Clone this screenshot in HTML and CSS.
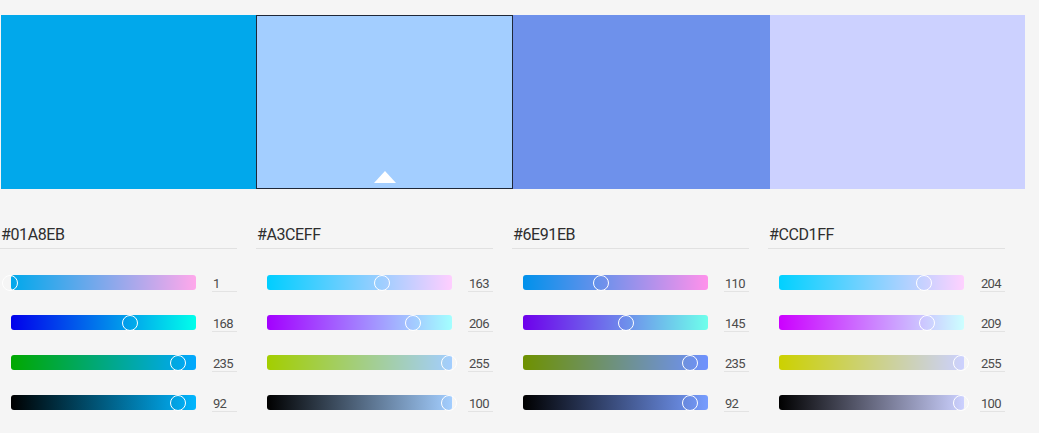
FILE: index.html
```html
<!DOCTYPE html>
<html>
<head>
<meta charset="utf-8">
<link rel="stylesheet" href="styles.css">
</head>
<body>
<div class="swatches">
  <div class="swatch s1"></div>
  <div class="swatch s2 active"><span class="marker"></span></div>
  <div class="swatch s3"></div>
  <div class="swatch s4"></div>
</div>
<div class="panels">
  <div class="panel">
    <div class="hex">#01A8EB</div>
    <div class="row"><div class="track" style="background: linear-gradient(to right, rgb(0,168,235), rgb(255,168,235));"><span class="thumb" style="left: calc(0.4% - 1.5px);"></span></div><div class="value">1</div></div>
    <div class="row"><div class="track" style="background: linear-gradient(to right, rgb(1,0,235), rgb(1,255,235));"><span class="thumb" style="left: calc(65.9% - 3px);"></span></div><div class="value">168</div></div>
    <div class="row"><div class="track" style="background: linear-gradient(to right, rgb(1,168,0), rgb(1,168,255));"><span class="thumb" style="left: calc(92.2% - 3.5px);"></span></div><div class="value">235</div></div>
    <div class="row"><div class="track" style="background: linear-gradient(to right, rgb(0,0,0), rgb(1,182,255));"><span class="thumb" style="left: calc(92% - 3.5px);"></span></div><div class="value">92</div></div>
  </div>
  <div class="panel">
    <div class="hex">#A3CEFF</div>
    <div class="row"><div class="track" style="background: linear-gradient(to right, rgb(0,206,255), rgb(255,206,255));"><span class="thumb" style="left: calc(63.9% - 3px);"></span></div><div class="value">163</div></div>
    <div class="row"><div class="track" style="background: linear-gradient(to right, rgb(163,0,255), rgb(163,255,255));"><span class="thumb" style="left: calc(80.8% - 3.5px);"></span></div><div class="value">206</div></div>
    <div class="row"><div class="track" style="background: linear-gradient(to right, rgb(163,206,0), rgb(163,206,255));"><span class="thumb" style="left: calc(100% - 3.5px);"></span></div><div class="value">255</div></div>
    <div class="row"><div class="track" style="background: linear-gradient(to right, rgb(0,0,0), rgb(163,206,255));"><span class="thumb" style="left: calc(100% - 3.5px);"></span></div><div class="value">100</div></div>
  </div>
  <div class="panel">
    <div class="hex">#6E91EB</div>
    <div class="row"><div class="track" style="background: linear-gradient(to right, rgb(0,145,235), rgb(255,145,235));"><span class="thumb" style="left: calc(43.1% - 2px);"></span></div><div class="value">110</div></div>
    <div class="row"><div class="track" style="background: linear-gradient(to right, rgb(110,0,235), rgb(110,255,235));"><span class="thumb" style="left: calc(56.9% - 2.5px);"></span></div><div class="value">145</div></div>
    <div class="row"><div class="track" style="background: linear-gradient(to right, rgb(110,145,0), rgb(110,145,255));"><span class="thumb" style="left: calc(92.2% - 3.5px);"></span></div><div class="value">235</div></div>
    <div class="row"><div class="track" style="background: linear-gradient(to right, rgb(0,0,0), rgb(119,157,255));"><span class="thumb" style="left: calc(92% - 3.5px);"></span></div><div class="value">92</div></div>
  </div>
  <div class="panel">
    <div class="hex">#CCD1FF</div>
    <div class="row"><div class="track" style="background: linear-gradient(to right, rgb(0,209,255), rgb(255,209,255));"><span class="thumb" style="left: calc(80% - 3.5px);"></span></div><div class="value">204</div></div>
    <div class="row"><div class="track" style="background: linear-gradient(to right, rgb(204,0,255), rgb(204,255,255));"><span class="thumb" style="left: calc(82% - 3.5px);"></span></div><div class="value">209</div></div>
    <div class="row"><div class="track" style="background: linear-gradient(to right, rgb(204,209,0), rgb(204,209,255));"><span class="thumb" style="left: calc(100% - 3.5px);"></span></div><div class="value">255</div></div>
    <div class="row"><div class="track" style="background: linear-gradient(to right, rgb(0,0,0), rgb(204,209,255));"><span class="thumb" style="left: calc(100% - 3.5px);"></span></div><div class="value">100</div></div>
  </div>
</div>
</body>
</html>
```

FILE: styles.css
```css
html, body {
  margin: 0;
  padding: 0;
  background: #f5f5f5;
  font-family: Roboto, "Noto Sans", sans-serif;
}

.swatches {
  display: flex;
  margin: 15px 0 0 1px;
  height: 174px;
}

.swatch {
  height: 174px;
  box-sizing: border-box;
}

.s1 { width: 255px; background: #01A8EB; }
.s2 { width: 257px; background: #A3CEFF; }
.s3 { width: 257px; background: #6E91EB; }
.s4 { width: 255px; background: #CCD1FF; }

.active {
  position: relative;
  border: 1px solid #1f2838;
}

.marker {
  position: absolute;
  left: 50%;
  bottom: 5px;
  transform: translateX(-50%);
  width: 0;
  height: 0;
  border-left: 11px solid transparent;
  border-right: 11px solid transparent;
  border-bottom: 12px solid #ffffff;
}

.panels {
  display: flex;
  padding-top: 35px;
}

.panel {
  width: 256px;
  flex: none;
}

.hex {
  width: 236px;
  height: 22px;
  line-height: 22px;
  font-size: 16px;
  letter-spacing: -0.4px;
  color: #2e2e2e;
  padding: 0 0 2px 1px;
  border-bottom: 1px solid #e1e1e1;
  margin-bottom: 26px;
}

.row {
  display: flex;
  align-items: flex-start;
  height: 15px;
  margin-bottom: 25px;
}

.track {
  position: relative;
  margin-left: 11px;
  width: 185px;
  height: 15px;
  border-radius: 3px;
}

.thumb {
  position: absolute;
  top: 50%;
  width: 14px;
  height: 14px;
  border: 1.5px solid #ffffff;
  border-radius: 50%;
  transform: translate(-50%, -50%);
  background: transparent;
}

.value {
  margin-left: 16px;
  width: 25px;
  height: 17px;
  padding-left: 1px;
  font-size: 13px;
  line-height: 17px;
  letter-spacing: -0.7px;
  color: #4b4b4b;
  border-bottom: 1px solid #e3e3e3;
  box-sizing: border-box;
}
```
